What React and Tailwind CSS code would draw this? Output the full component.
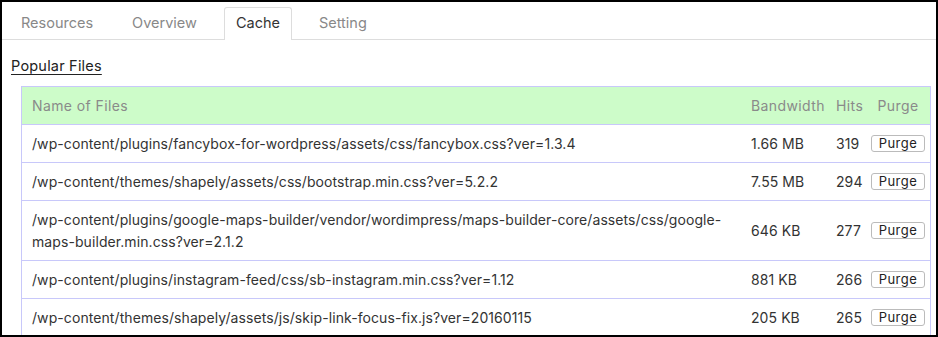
import React from 'react';

const rows = [
  { file: '/wp-content/plugins/fancybox-for-wordpress/assets/css/fancybox.css?ver=1.3.4', size: '1.66 MB', hits: 319 },
  { file: '/wp-content/themes/shapely/assets/css/bootstrap.min.css?ver=5.2.2', size: '7.55 MB', hits: 294 },
  { file: '/wp-content/plugins/google-maps-builder/vendor/wordimpress/maps-builder-core/assets/css/google-maps-builder.min.css?ver=2.1.2', size: '646 KB', hits: 277 },
  { file: '/wp-content/plugins/instagram-feed/css/sb-instagram.min.css?ver=1.12', size: '881 KB', hits: 266 },
  { file: '/wp-content/themes/shapely/assets/js/skip-link-focus-fix.js?ver=20160115', size: '205 KB', hits: 265 },
];

const tabs = ['Resources', 'Overview', 'Cache', 'Setting'];

const Row = ({ file, size, hits }) => (
  <div className="grid grid-cols-[724px_85px_35px_64px] items-center border-t border-[#c8c8fa] text-[#333]">
    <div className="pl-[10px] pr-[5px] py-[7.5px] leading-[22px] break-words">{file}</div>
    <div className="pl-[5px]">{size}</div>
    <div className="pl-[5px]">{hits}</div>
    <div className="flex justify-center">
      <button className="h-[17px] px-[7px] border border-[#bbb] rounded-[3px] bg-white text-[13px] leading-[15px] text-[#222] tracking-[0.5px]">Purge</button>
    </div>
  </div>
);

export default function App() {
  return (
    <div className="w-[938px] h-[337px] overflow-hidden border-2 border-black bg-white" style={{ fontFamily: 'Inter, "DejaVu Sans", sans-serif' }}>
      <div className="flex items-end h-[38px] border-b border-[#ddd] pl-[7px] gap-[15px]">
        {tabs.map((t) => (
          <div
            key={t}
            className={
              t === 'Cache'
                ? 'h-[33px] -mb-px px-[11px] pb-[2px] flex items-center border border-b-0 border-[#ddd] rounded-t-[3px] bg-white text-[14.5px] text-[#333]'
                : 'h-[33px] -mb-px px-[11px] pb-[2px] flex items-center border border-transparent text-[14.5px] text-[#888]'
            }
          >
            {t}
          </div>
        ))}
      </div>
      <div className="pt-[16px] pl-[9px] leading-[20px] text-[14.5px] text-[#222] tracking-[0.2px]">
        <span className="underline underline-offset-[3px]">Popular Files</span>
      </div>
      <div className="mt-[10px] ml-[19px] w-[910px] border border-[#c8c8fa] text-[14px] tracking-[0.08px]">
        <div className="grid grid-cols-[724px_85px_35px_64px] items-center bg-[#cdfcc9] text-[#8a8a8a] h-[37px] tracking-[0.4px]">
          <div className="pl-[10px]">Name of Files</div>
          <div className="pl-[5px] whitespace-nowrap">Bandwidth</div>
          <div className="pl-[5px]">Hits</div>
          <div className="text-center">Purge</div>
        </div>
        {rows.map((r) => (
          <Row key={r.file} {...r} />
        ))}
      </div>
    </div>
  );
}
